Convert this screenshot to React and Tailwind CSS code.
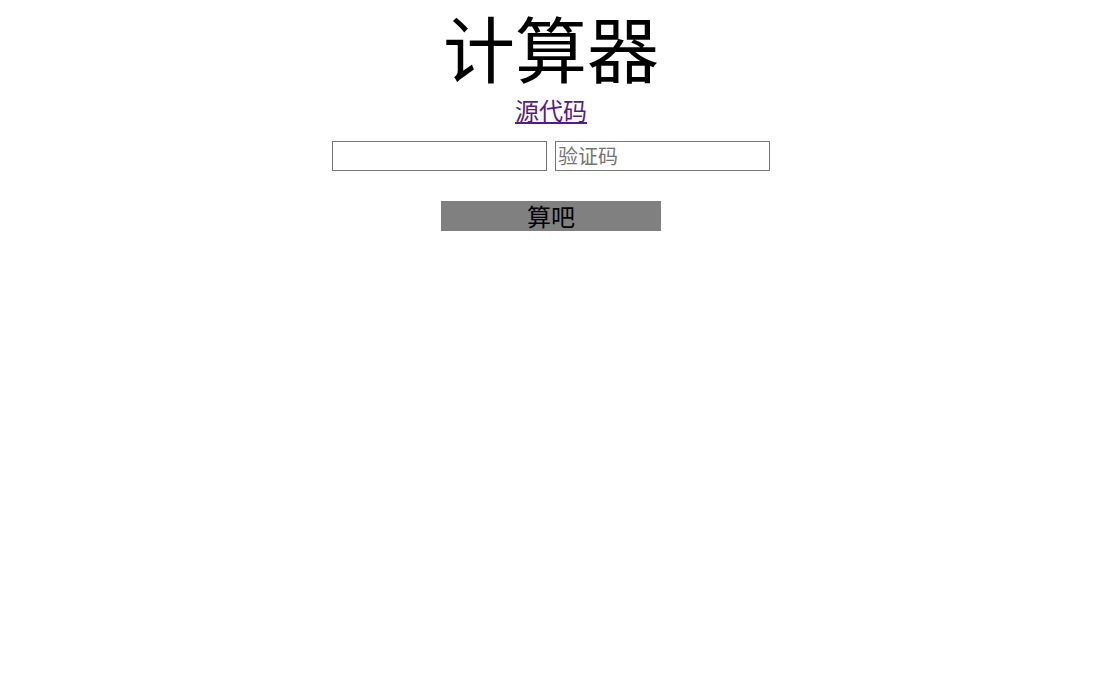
import React, { useState } from "react";

const cjk = { fontFamily: '"Noto Sans CJK SC", "Noto Sans", sans-serif' };

const App = () => {
  const [expr, setExpr] = useState("");
  const [code, setCode] = useState("");

  return (
    <div className="min-h-screen bg-white flex flex-col items-center" style={cjk}>
      <h1 className="text-[72px] leading-[92px] font-normal text-black">计算器</h1>
      <a href="#" className="text-[24px] leading-[36px] text-[#551a8b] underline">
        源代码
      </a>
      {/* inputs */}
      <div className="flex gap-2 mt-[13px]">
        <input
          value={expr}
          onChange={(e) => setExpr(e.target.value)}
          className="w-[215px] h-[30px] border border-[#767676] px-[2px] text-[20px] outline-none"
        />
        <input
          value={code}
          onChange={(e) => setCode(e.target.value)}
          placeholder="验证码"
          className="w-[215px] h-[30px] border border-[#767676] px-[2px] text-[20px] outline-none placeholder:text-[#757575]"
        />
      </div>
      <button className="mt-[30px] w-[220px] h-[30px] bg-[#808080] text-black text-[24px] leading-[30px]">
        算吧
      </button>
    </div>
  );
};

export default App;
